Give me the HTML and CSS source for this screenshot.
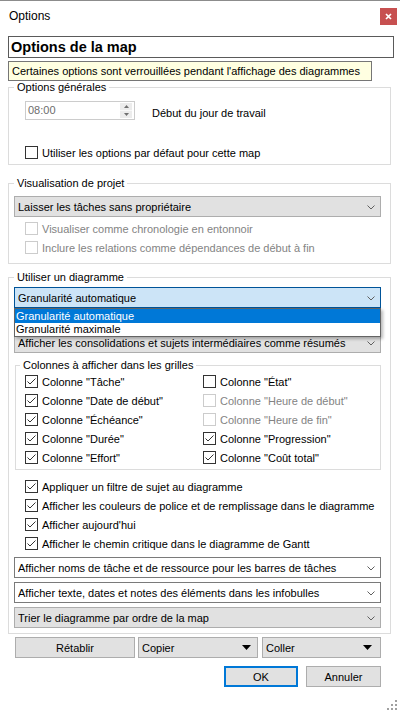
FILE: index.html
```html
<!DOCTYPE html>
<html lang="fr">
<head>
<meta charset="utf-8">
<title>Options</title>
<link rel="stylesheet" href="styles.css">
</head>
<body>
<div class="window">
  <div class="titlebar">
    <span class="title">Options</span>
    <span class="close"><svg width="7" height="7" viewBox="0 0 7 7"><path d="M1 1 L6 6 M6 1 L1 6" stroke="#fff" stroke-width="1.7" fill="none"/></svg></span>
  </div>
  <div class="content">
    <div class="header">Options de la map</div>
    <div class="note">Certaines options sont verrouillées pendant l'affichage des diagrammes</div>

    <fieldset class="group g1">
      <legend>Options générales</legend>
      <div class="spin-row">
        <div class="spin">
          <span class="spin-val">08:00</span>
          <span class="spin-btns">
            <span class="spin-btn"><svg width="5" height="3" viewBox="0 0 5 3"><path d="M0 3 L2.5 0 L5 3Z" fill="#707070"/></svg></span>
            <span class="spin-btn"><svg width="5" height="3" viewBox="0 0 5 3"><path d="M0 0 L2.5 3 L5 0Z" fill="#707070"/></svg></span>
          </span>
        </div>
        <span class="spin-label">Début du jour de travail</span>
      </div>
      <div class="check g1-check"><svg class="cb" viewBox="0 0 13 13"><rect x="0.5" y="0.5" width="12" height="12" fill="#fff" stroke="#333"/></svg><span>Utiliser les options par défaut pour cette map</span></div>
    </fieldset>

    <fieldset class="group g2">
      <legend>Visualisation de projet</legend>
      <div class="combo gray g2-combo"><span class="combo-text">Laisser les tâches sans propriétaire</span><svg class="chev" viewBox="0 0 8 5"><path d="M0.5 0.5 L4 4 L7.5 0.5" fill="none" stroke="#606060"/></svg></div>
      <div class="g2-checks">
        <div class="check disabled"><svg class="cb" viewBox="0 0 13 13"><rect x="0.5" y="0.5" width="12" height="12" fill="#fff" stroke="#cccccc"/></svg><span>Visualiser comme chronologie en entonnoir</span></div>
        <div class="check disabled"><svg class="cb" viewBox="0 0 13 13"><rect x="0.5" y="0.5" width="12" height="12" fill="#fff" stroke="#cccccc"/></svg><span>Inclure les relations comme dépendances de début à fin</span></div>
      </div>
    </fieldset>

    <fieldset class="group g3">
      <legend>Utiliser un diagramme</legend>
      <div class="combo-wrap">
        <div class="combo focused"><span class="combo-text">Granularité automatique</span><svg class="chev" viewBox="0 0 8 5"><path d="M0.5 0.5 L4 4 L7.5 0.5" fill="none" stroke="#606060"/></svg></div>
        <div class="dropdown">
          <div class="dd-item selected">Granularité automatique</div>
          <div class="dd-item">Granularité maximale</div>
        </div>
      </div>
      <div class="combo gray combo-second"><span class="combo-text">Afficher les consolidations et sujets intermédiaires comme résumés</span><svg class="chev" viewBox="0 0 8 5"><path d="M0.5 0.5 L4 4 L7.5 0.5" fill="none" stroke="#606060"/></svg></div>

      <fieldset class="group inner">
        <legend>Colonnes à afficher dans les grilles</legend>
        <div class="cols">
          <div class="check"><svg class="cb" viewBox="0 0 13 13"><rect x="0.5" y="0.5" width="12" height="12" fill="#fff" stroke="#333"/><path d="M2.5 6.5 L5 9 L10.5 3.5" fill="none" stroke="#333"/></svg><span>Colonne "Tâche"</span></div>
          <div class="check"><svg class="cb" viewBox="0 0 13 13"><rect x="0.5" y="0.5" width="12" height="12" fill="#fff" stroke="#333"/></svg><span>Colonne "État"</span></div>
          <div class="check"><svg class="cb" viewBox="0 0 13 13"><rect x="0.5" y="0.5" width="12" height="12" fill="#fff" stroke="#333"/><path d="M2.5 6.5 L5 9 L10.5 3.5" fill="none" stroke="#333"/></svg><span>Colonne "Date de début"</span></div>
          <div class="check disabled"><svg class="cb" viewBox="0 0 13 13"><rect x="0.5" y="0.5" width="12" height="12" fill="#fff" stroke="#cccccc"/></svg><span>Colonne "Heure de début"</span></div>
          <div class="check"><svg class="cb" viewBox="0 0 13 13"><rect x="0.5" y="0.5" width="12" height="12" fill="#fff" stroke="#333"/><path d="M2.5 6.5 L5 9 L10.5 3.5" fill="none" stroke="#333"/></svg><span>Colonne "Échéance"</span></div>
          <div class="check disabled"><svg class="cb" viewBox="0 0 13 13"><rect x="0.5" y="0.5" width="12" height="12" fill="#fff" stroke="#cccccc"/></svg><span>Colonne "Heure de fin"</span></div>
          <div class="check"><svg class="cb" viewBox="0 0 13 13"><rect x="0.5" y="0.5" width="12" height="12" fill="#fff" stroke="#333"/><path d="M2.5 6.5 L5 9 L10.5 3.5" fill="none" stroke="#333"/></svg><span>Colonne "Durée"</span></div>
          <div class="check"><svg class="cb" viewBox="0 0 13 13"><rect x="0.5" y="0.5" width="12" height="12" fill="#fff" stroke="#333"/><path d="M2.5 6.5 L5 9 L10.5 3.5" fill="none" stroke="#333"/></svg><span>Colonne "Progression"</span></div>
          <div class="check"><svg class="cb" viewBox="0 0 13 13"><rect x="0.5" y="0.5" width="12" height="12" fill="#fff" stroke="#333"/><path d="M2.5 6.5 L5 9 L10.5 3.5" fill="none" stroke="#333"/></svg><span>Colonne "Effort"</span></div>
          <div class="check"><svg class="cb" viewBox="0 0 13 13"><rect x="0.5" y="0.5" width="12" height="12" fill="#fff" stroke="#333"/><path d="M2.5 6.5 L5 9 L10.5 3.5" fill="none" stroke="#333"/></svg><span>Colonne "Coût total"</span></div>
        </div>
      </fieldset>

      <div class="g3-checks">
        <div class="check"><svg class="cb" viewBox="0 0 13 13"><rect x="0.5" y="0.5" width="12" height="12" fill="#fff" stroke="#333"/><path d="M2.5 6.5 L5 9 L10.5 3.5" fill="none" stroke="#333"/></svg><span>Appliquer un filtre de sujet au diagramme</span></div>
        <div class="check"><svg class="cb" viewBox="0 0 13 13"><rect x="0.5" y="0.5" width="12" height="12" fill="#fff" stroke="#333"/><path d="M2.5 6.5 L5 9 L10.5 3.5" fill="none" stroke="#333"/></svg><span>Afficher les couleurs de police et de remplissage dans le diagramme</span></div>
        <div class="check"><svg class="cb" viewBox="0 0 13 13"><rect x="0.5" y="0.5" width="12" height="12" fill="#fff" stroke="#333"/><path d="M2.5 6.5 L5 9 L10.5 3.5" fill="none" stroke="#333"/></svg><span>Afficher aujourd'hui</span></div>
        <div class="check"><svg class="cb" viewBox="0 0 13 13"><rect x="0.5" y="0.5" width="12" height="12" fill="#fff" stroke="#333"/><path d="M2.5 6.5 L5 9 L10.5 3.5" fill="none" stroke="#333"/></svg><span>Afficher le chemin critique dans le diagramme de Gantt</span></div>
      </div>

      <div class="combo white combo-list"><span class="combo-text">Afficher noms de tâche et de ressource pour les barres de tâches</span><svg class="chev" viewBox="0 0 8 5"><path d="M0.5 0.5 L4 4 L7.5 0.5" fill="none" stroke="#606060"/></svg></div>
      <div class="combo white combo-list"><span class="combo-text">Afficher texte, dates et notes des éléments dans les infobulles</span><svg class="chev" viewBox="0 0 8 5"><path d="M0.5 0.5 L4 4 L7.5 0.5" fill="none" stroke="#606060"/></svg></div>
      <div class="combo gray combo-list"><span class="combo-text">Trier le diagramme par ordre de la map</span><svg class="chev" viewBox="0 0 8 5"><path d="M0.5 0.5 L4 4 L7.5 0.5" fill="none" stroke="#606060"/></svg></div>
    </fieldset>
  </div>

  <div class="button-row">
    <div class="btn btn-reset">Rétablir</div>
    <div class="btn btn-menu btn-copy"><span>Copier</span><svg class="tri" viewBox="0 0 9 5"><path d="M0 0 L9 0 L4.5 5Z" fill="#000"/></svg></div>
    <div class="btn btn-menu btn-paste"><span>Coller</span><svg class="tri" viewBox="0 0 9 5"><path d="M0 0 L9 0 L4.5 5Z" fill="#000"/></svg></div>
  </div>

  <div class="action-row">
    <div class="btn btn-ok">OK</div>
    <div class="btn btn-cancel">Annuler</div>
  </div>

  <div class="grip-row">
    <svg class="grip" viewBox="0 0 11 11">
      <rect x="8" y="0" width="2" height="2" fill="#a0a0a0"/>
      <rect x="4" y="4" width="2" height="2" fill="#a0a0a0"/>
      <rect x="8" y="4" width="2" height="2" fill="#a0a0a0"/>
      <rect x="0" y="8" width="2" height="2" fill="#a0a0a0"/>
      <rect x="4" y="8" width="2" height="2" fill="#a0a0a0"/>
      <rect x="8" y="8" width="2" height="2" fill="#a0a0a0"/>
    </svg>
  </div>
</div>
</body>
</html>
```

FILE: styles.css
```css
* {
  box-sizing: border-box;
}

body {
  margin: 0;
  background: #ffffff;
  font-family: "Liberation Sans", Arial, sans-serif;
  font-size: 11px;
  color: #000000;
}

.window {
  width: 400px;
  height: 713px;
  border-top: 1px solid #8c8c8c;
  display: flex;
  flex-direction: column;
  overflow: hidden;
  background: #ffffff;
}

/* title bar */
.titlebar {
  display: flex;
  align-items: flex-start;
  height: 35px;
  padding: 7px 3px 0 9px;
  flex-shrink: 0;
}

.title {
  font-size: 12px;
  line-height: 17px;
}

.close {
  margin-left: auto;
  width: 17px;
  height: 17px;
  background: #c75050;
  display: flex;
  align-items: center;
  justify-content: center;
}

.close svg {
  display: block;
}

/* content */
.content {
  padding-left: 8px;
  flex-shrink: 0;
}

.header {
  width: 386px;
  height: 22px;
  border: 1px solid #5a5a5a;
  font-weight: bold;
  font-size: 14.5px;
  line-height: 20px;
  padding-left: 2px;
  white-space: nowrap;
}

.note {
  margin-top: 3px;
  width: 364px;
  height: 20px;
  border: 1px solid #767676;
  background: #ffffe1;
  line-height: 18px;
  padding-left: 3px;
  white-space: nowrap;
}

/* group boxes */
.group {
  margin: 0;
  padding: 0;
  border: 1px solid #dcdcdc;
  width: 383px;
  min-width: 0;
}

.group legend {
  margin-left: 5px;
  padding: 0 3px;
  line-height: 13px;
  font-size: 11px;
}

.g1 {
  padding-bottom: 2px;
}

.g2 {
  margin-top: 12px;
  padding-bottom: 6px;
}

.g3 {
  margin-top: 7px;
  padding-bottom: 5px;
}

.inner {
  width: 366px;
  margin-left: 6px;
  margin-top: 6px;
  padding-bottom: 2px;
}

.inner legend {
  margin-left: 4px;
}

/* spin */
.spin-row {
  display: flex;
  align-items: center;
  margin-top: 7px;
  padding-left: 16px;
}

.spin {
  width: 110px;
  height: 19px;
  border: 1px solid #cccccc;
  display: flex;
  align-items: center;
  padding: 0 2px 0 2px;
  color: #6d6d6d;
}

.spin-val {
  line-height: 15px;
}

.spin-btns {
  margin-left: auto;
  width: 12px;
  height: 15px;
  display: flex;
  flex-direction: column;
  background: #ececec;
}

.spin-btn {
  flex: 1;
  display: flex;
  align-items: center;
  justify-content: center;
}

.spin-btn + .spin-btn {
  border-top: 1px solid #f8f8f8;
}

.spin-btn svg {
  display: block;
}

.spin-label {
  margin-left: 17px;
  margin-top: 4px;
}

/* checkboxes */
.check {
  display: flex;
  align-items: center;
  height: 19px;
  white-space: nowrap;
}

.cb {
  width: 13px;
  height: 13px;
  flex-shrink: 0;
  margin-right: 4px;
  display: block;
}

.check.disabled {
  color: #838383;
}

.g1-check {
  margin-top: 23px;
  padding-left: 16px;
}

.g2-checks {
  margin-top: 2px;
  padding-left: 16px;
}

.g3-checks {
  margin-top: 7px;
  padding-left: 16px;
}

.cols {
  display: grid;
  grid-template-columns: 178px 1fr;
  padding-left: 9px;
}

/* combo boxes */
.combo {
  display: flex;
  align-items: center;
  width: 367px;
  height: 21px;
  margin-left: 5px;
  border: 1px solid #adadad;
  padding: 0 5px 0 3px;
  white-space: nowrap;
}

.combo.gray {
  background: #e1e1e1;
  border-color: #adadad;
}

.combo.white {
  background: #ffffff;
  border-color: #7a7a7a;
}

.combo.focused {
  background: #cce4f7;
  border-color: #005499;
  margin-left: 0;
}

.combo-text {
  flex: 1;
  overflow: hidden;
}

.chev {
  width: 8px;
  height: 5px;
  display: block;
  flex-shrink: 0;
  margin-top: 1px;
}

.g2-combo {
  margin-top: 6px;
}

.combo-wrap {
  position: relative;
  margin-top: 3px;
  margin-left: 5px;
  width: 367px;
}

.dropdown {
  position: absolute;
  top: 21px;
  left: 0;
  width: 367px;
  background: #ffffff;
  border: 1px solid #646464;
  box-shadow: 2px 2px 3px rgba(0, 0, 0, 0.28);
  z-index: 10;
}

.dd-item {
  height: 13px;
  line-height: 13px;
  padding-left: 1px;
  white-space: nowrap;
}

.dd-item.selected {
  height: 14px;
  line-height: 14px;
  background: #0078d7;
  color: #ffffff;
}

.combo-second {
  margin-top: 24px;
}

.combo-list {
  margin-top: 4px;
}

/* buttons */
.button-row {
  display: flex;
  margin-top: 3px;
  padding-left: 15px;
  flex-shrink: 0;
}

.btn {
  height: 21px;
  background: #e1e1e1;
  border: 1px solid #adadad;
  display: flex;
  align-items: center;
  justify-content: center;
  white-space: nowrap;
}

.btn-reset {
  width: 120px;
}

.btn-menu {
  justify-content: flex-start;
  padding: 0 6px 0 3px;
}

.btn-menu span {
  flex: 1;
}

.btn-copy {
  width: 120px;
  margin-left: 3px;
}

.btn-paste {
  width: 119px;
  margin-left: 4px;
  padding-right: 8px;
}

.tri {
  width: 9px;
  height: 5px;
  display: block;
  flex-shrink: 0;
}

.action-row {
  display: flex;
  justify-content: flex-end;
  margin-top: 8px;
  padding-right: 19px;
  flex-shrink: 0;
}

.btn-ok {
  width: 74px;
  border: 2px solid #0078d7;
  margin-right: 8px;
}

.btn-cancel {
  width: 75px;
}

.grip-row {
  display: flex;
  justify-content: flex-end;
  margin-top: 13px;
  padding-right: 2px;
  flex-shrink: 0;
}

.grip {
  width: 11px;
  height: 11px;
  display: block;
}
```
